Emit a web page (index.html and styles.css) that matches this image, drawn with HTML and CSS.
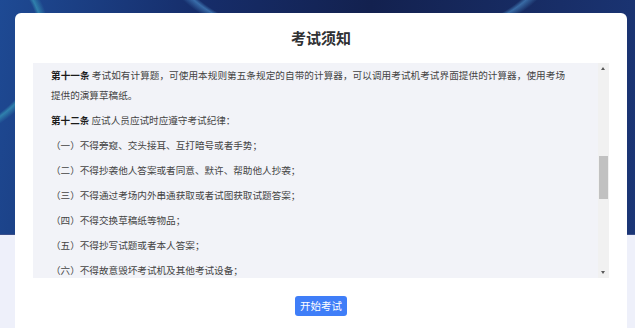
FILE: index.html
```html
<!DOCTYPE html>
<html lang="zh-CN">
<head>
  <meta charset="UTF-8" />
  <meta name="viewport" content="width=device-width, initial-scale=1.0" />
  <title>考试须知</title>
  <link rel="stylesheet" href="styles.css">
</head>
<body>
  <div class="backdrop"></div>

  <div class="notice-card">
    <h1 class="notice-title">考试须知</h1>

    <div class="rules-box">
      <div class="rules" id="rules">
        <p><b>第一条</b> 为规范计算机化考试考场管理，保证考试公平、公正，根据有关规定，制定本规则。</p>
        <p><b>第二条</b> 应试人员应当在考试开始前30分钟，凭准考证和有效身份证件进入考场，按照准考证上的座位号对号入座，并将准考证和有效身份证件放在桌面左上角以便查验。</p>
        <p><b>第三条</b> 考试开始30分钟后，迟到的应试人员不得进入考场参加考试；考试开始60分钟后，应试人员方可交卷离场，离场后不得再次进入考场。</p>
        <p><b>第四条</b> 应试人员不得携带手机、电子记事本、智能手表等具有通讯、存储功能的电子设备以及书籍、资料进入考场座位，已携带的应当按照监考人员要求放在指定位置。</p>
        <p><b>第五条</b> 应试人员可以携带黑色墨水笔、2B铅笔、橡皮以及无声、无文本编辑储存功能的计算器进入考场，其他物品一律不得带入考场座位。</p>
        <p><b>第六条</b> 应试人员进入考场后，应当核对考试机上显示的本人姓名、照片、准考证号等信息，如有疑问应当及时向监考人员举手示意。</p>
        <p><b>第七条</b> 应试人员应当认真阅读屏幕上的答题说明，按照要求在考试机上作答。</p>
        <p><b>第八条</b> 考试过程中如遇考试机故障、网络中断等异常情况，应试人员应当举手示意，由监考人员或技术人员处理，不得自行处置。</p>
        <p><b>第九条</b> 应试人员对试题内容有疑问的，不得要求监考人员解释，但遇试卷显示不清、试题缺页等问题时，可举手询问，监考人员应当及时处理。</p>
        <p><b>第十条</b> 应试人员应当保持考场安静，不得吸烟，不得喧哗，不得擅自离开座位，考试期间确需离开的，应当经监考人员同意并由其陪同。</p>
        <p id="current"><b>第十一条</b> 考试如有计算题，可使用本规则第五条规定的自带的计算器，可以调用考试机考试界面提供的计算器，使用考场提供的演算草稿纸。</p>
        <p><b>第十二条</b> 应试人员应试时应遵守考试纪律：</p>
        <p>（一）不得旁窥、交头接耳、互打暗号或者手势；</p>
        <p>（二）不得抄袭他人答案或者同意、默许、帮助他人抄袭；</p>
        <p>（三）不得通过考场内外串通获取或者试图获取试题答案；</p>
        <p>（四）不得交换草稿纸等物品；</p>
        <p>（五）不得抄写试题或者本人答案；</p>
        <p>（六）不得故意毁坏考试机及其他考试设备；</p>
        <p>（七）不得擅自关闭、重启考试机或者进入与考试无关的程序；</p>
        <p>（八）不得将草稿纸带出考场；</p>
        <p>（九）不得由他人冒名代替参加考试；</p>
        <p>（十）不得有其他违纪违规行为。</p>
        <p><b>第十三条</b> 考试结束前，应试人员完成作答的，可以点击交卷按钮提交试卷，交卷后不得再次登录考试系统继续作答，由此产生的后果由应试人员自行承担。</p>
        <p><b>第十四条</b> 考试结束时间到，考试系统将自动提交试卷，应试人员应当停止作答，将草稿纸留在桌面上，经监考人员允许后离开考场。</p>
        <p><b>第十五条</b> 应试人员应当服从监考人员的管理，不得以任何理由妨碍监考人员正常履行职责，不得扰乱考场及其他考试工作场所秩序。</p>
        <p><b>第十六条</b> 应试人员违反本规则的，由考试机构按照《专业技术人员资格考试违纪违规行为处理规定》等有关规定予以处理；情节严重的，依法追究相应责任。</p>
        <p><b>第十七条</b> 本规则自发布之日起施行。</p>
        <p><b>第十八条</b> 本规则由考试机构负责解释。</p>
      </div>

      <div class="scroll-rail">
        <span class="rail-btn rail-up"></span>
        <span class="rail-thumb" id="thumb"></span>
        <span class="rail-btn rail-down"></span>
      </div>
    </div>

    <div class="actions">
      <button class="start-btn">开始考试</button>
    </div>
  </div>

  <script>
    // scroll the notice so that article 11 sits at the top
    const rules = document.getElementById('rules');
    const current = document.getElementById('current');
    const thumb = document.getElementById('thumb');

    function updateThumb() {
      const btn = 11;
      const track = rules.clientHeight - btn * 2;
      const len = Math.max(20, track * rules.clientHeight / rules.scrollHeight);
      const range = rules.scrollHeight - rules.clientHeight;
      const top = btn + (track - len) * (range ? rules.scrollTop / range : 0);
      thumb.style.top = top + 'px';
      thumb.style.height = len + 'px';
    }

    rules.scrollTop = current.offsetTop - rules.offsetTop - 2;
    rules.addEventListener('scroll', updateThumb);
    updateThumb();
  </script>
</body>
</html>
```

FILE: styles.css
```css
html, body {
  height: 100%;
}
body {
  margin: 0;
  font-family: "Noto Sans CJK SC", "Noto Sans", sans-serif;
  background: #eef0fa;
  overflow: hidden;
  position: relative;
}
.backdrop {
  position: absolute;
  left: 0;
  top: 0;
  width: 100%;
  height: 234px;
  background:
    radial-gradient(ellipse 260px 120px at 360px -40px, transparent 70%, rgba(90, 170, 230, 0.5) 72%, transparent 76%),
    radial-gradient(ellipse 180px 140px at -90px 40px, transparent 72%, rgba(70, 200, 210, 0.45) 74%, transparent 78%),
    linear-gradient(100deg, #1e4a94 0%, #162d6a 30%, #13214f 55%, #1b3677 100%);
  border-bottom: 1px solid #3b4f8a;
}
.notice-card {
  position: relative;
  margin: 13px 0 0 15px;
  width: 576px;
  padding: 14px 18px 20px;
  background: #ffffff;
  border-radius: 6px;
}
.notice-title {
  margin: 0 0 14px;
  font-size: 15px;
  line-height: 22px;
  font-weight: bold;
  color: #303133;
  text-align: center;
}
.rules-box {
  position: relative;
  height: 215px;
  background: #f2f3f8;
}
.rules {
  height: 100%;
  box-sizing: border-box;
  overflow-y: scroll;
  scrollbar-width: none;
  padding: 0 44px 0 18px;
  font-size: 9.6px;
  line-height: 20px;
  color: #444444;
  text-align: justify;
}
.rules::-webkit-scrollbar {
  display: none;
}
.rules p {
  margin: 0 0 5px;
}
.rules p:first-child {
  padding-top: 10px;
}
.rules p:last-child {
  padding-bottom: 10px;
}
.rules b {
  color: #1a1a1a;
}
.scroll-rail {
  position: absolute;
  top: 0;
  right: 0;
  width: 11px;
  height: 100%;
  background: #f1f1f1;
}
.rail-btn {
  position: absolute;
  left: 3px;
  width: 0;
  height: 0;
  border-left: 2.5px solid transparent;
  border-right: 2.5px solid transparent;
}
.rail-up {
  top: 4px;
  border-bottom: 3px solid #5a5a5a;
}
.rail-down {
  bottom: 4px;
  border-top: 3px solid #5a5a5a;
}
.rail-thumb {
  position: absolute;
  left: 1px;
  width: 9px;
  background: #c1c1c1;
}
.actions {
  display: flex;
  justify-content: center;
  margin-top: 18px;
}
.start-btn {
  height: 20px;
  padding: 0 5px;
  border: none;
  border-radius: 3px;
  background: #3f7ef8;
  color: #ffffff;
  font-family: inherit;
  font-size: 10.5px;
  line-height: 20px;
  cursor: pointer;
}
```
